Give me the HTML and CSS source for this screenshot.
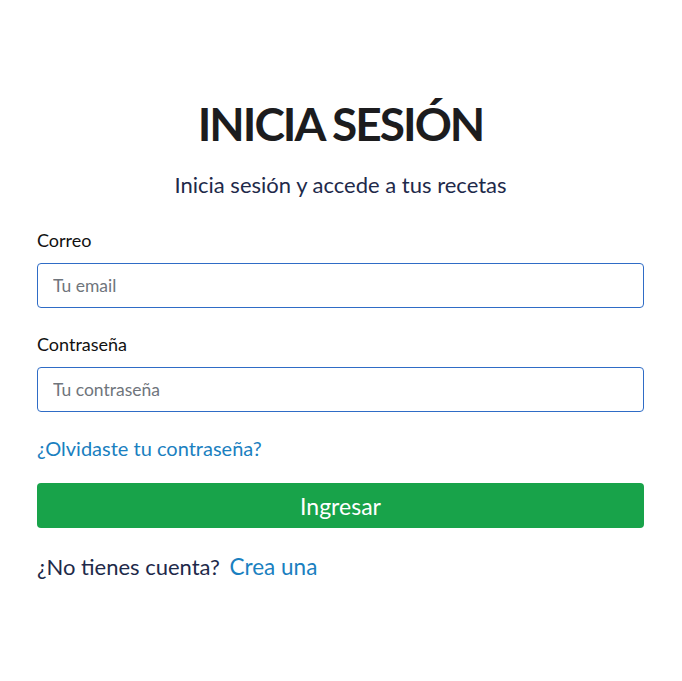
FILE: index.html
```html
<!DOCTYPE html>
<html lang="es">
<head>
<meta charset="utf-8">
<title>Inicia sesión</title>
<link rel="stylesheet" href="styles.css">
</head>
<body>
<main class="login">
  <h1 class="title">INICIA SESIÓN</h1>
  <p class="subtitle">Inicia sesión y accede a tus recetas</p>
  <form class="form">
    <div class="fields">
      <div class="field">
        <label class="label" for="email">Correo</label>
        <input class="input" id="email" type="email" placeholder="Tu email">
      </div>
      <div class="field">
        <label class="label" for="pass">Contraseña</label>
        <input class="input" id="pass" type="password" placeholder="Tu contraseña">
      </div>
    </div>
    <a class="link forgot" href="#">¿Olvidaste tu contraseña?</a>
    <button class="btn" type="button">Ingresar</button>
    <p class="signup">¿No tienes cuenta? <a class="link signup-link" href="#">Crea una</a></p>
  </form>
</main>
</body>
</html>
```
FILE: styles.css
```css
* { box-sizing: border-box; }
body {
  margin: 0;
  background: #fff;
  font-family: Lato, "Liberation Sans", sans-serif;
}
.login {
  width: 607px;
  margin: 0 0 0 37px;
  padding-top: 92px;
  display: flex;
  flex-direction: column;
}
.title {
  margin: 0;
  text-align: center;
  font-size: 46px;
  font-weight: 700;
  letter-spacing: -2px;
  color: #1c1c1e;
  line-height: 64px;
}
.subtitle {
  margin: 14px 0 0;
  text-align: center;
  font-size: 22px;
  color: #1e2a4a;
  line-height: 30px;
}
.form {
  margin-top: 28px;
  display: flex;
  flex-direction: column;
}
.fields {
  display: flex;
  flex-direction: column;
  gap: 24px;
}
.field {
  display: flex;
  flex-direction: column;
}
.label {
  font-size: 18px;
  color: #111;
  line-height: 24px;
  margin-bottom: 11px;
}
.input {
  height: 45px;
  border: 1px solid #2f6cc6;
  border-radius: 4px;
  padding: 0 15px;
  font-family: inherit;
  font-size: 17.5px;
  color: #333;
  outline: none;
}
.input::placeholder { color: #6f757c; }
.link {
  color: #1a80c0;
  text-decoration: none;
}
.forgot {
  font-size: 20px;
  line-height: 28px;
  margin-top: 22px;
  align-self: flex-start;
}
.btn {
  margin-top: 21px;
  height: 45px;
  border: none;
  border-radius: 4px;
  background: #18a34a;
  color: #fff;
  font-family: inherit;
  font-size: 23px;
}
.signup {
  margin: 24px 0 0;
  font-size: 22px;
  line-height: 30px;
  color: #1e2a4a;
}
.signup-link {
  margin-left: 4px;
  font-size: 22.5px;
}
```
